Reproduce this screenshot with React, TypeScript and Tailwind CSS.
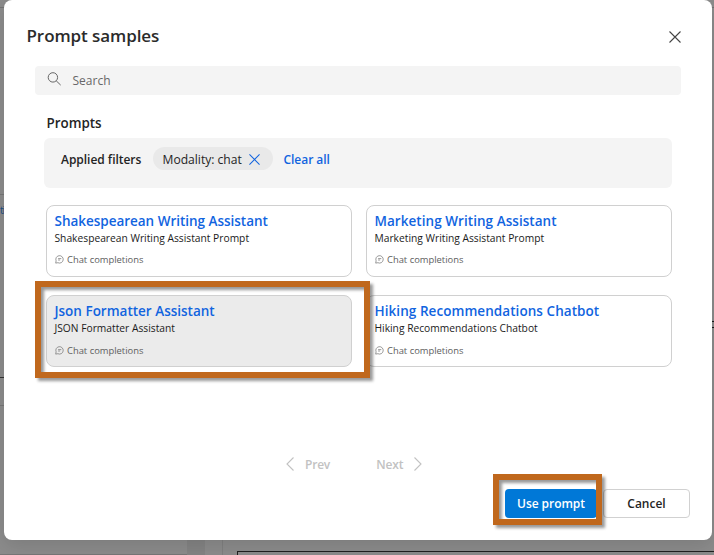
import React from "react";

type Prompt = { title: string; description: string; selected?: boolean; titleSpacing: string; metaOffset: string };

const prompts: Prompt[] = [
  { title: "Shakespearean Writing Assistant", description: "Shakespearean Writing Assistant Prompt", titleSpacing: "tracking-[-0.02px]", metaOffset: "mt-[7px]" },
  { title: "Marketing Writing Assistant", description: "Marketing Writing Assistant Prompt", titleSpacing: "tracking-[0.05px]", metaOffset: "mt-[7px]" },
  { title: "Json Formatter Assistant", description: "JSON Formatter Assistant", selected: true, titleSpacing: "tracking-[0px]", metaOffset: "mt-[8px]" },
  { title: "Hiking Recommendations Chatbot", description: "Hiking Recommendations Chatbot", titleSpacing: "tracking-[0.06px]", metaOffset: "mt-[8px]" },
];

function Cross({ className }: { className: string }) {
  return (
    <svg viewBox="0 0 12 12" className={className} fill="none" stroke="currentColor" strokeWidth="1.1">
      <path d="M.5.5l11 11M11.5.5l-11 11" />
    </svg>
  );
}

function ChatIcon() {
  return (
    <svg viewBox="0 0 9 9" className="mb-[2px] h-[9px] w-[9px] shrink-0" fill="none" stroke="#707070" strokeWidth=".7">
      <path d="M.7 8.1l.4-2.3A3.7 3.7 0 1 1 2.9 7.7zM3.1 3.6h3.2M3.1 5h2" />
    </svg>
  );
}

function Card({ prompt }: { prompt: Prompt }) {
  return (
    <div className={`flex h-[72px] flex-col rounded-[8px] border border-[#d0d0d0] pl-[7.5px] ${prompt.selected ? "bg-[#ebebeb]" : "bg-white"}`}>
      <div className={`mt-[6px] h-[18px] text-[13.5px] leading-[18px] font-semibold whitespace-nowrap text-[#1164df] ${prompt.titleSpacing}`}>{prompt.title}</div>
      <div className="h-[16px] text-[10.25px] leading-[16px] whitespace-nowrap text-[#1b1b1b]">{prompt.description}</div>
      <div className={`flex h-[14px] items-center gap-[3.5px] text-[9.4px] leading-[14px] text-[#606060] ${prompt.metaOffset}`}>
        <ChatIcon />
        <span>Chat completions</span>
      </div>
    </div>
  );
}

function Backdrop() {
  return (
    <div className="absolute inset-0 overflow-hidden bg-[#8c8c8c]">
      <div className="absolute top-[7px] h-px w-full bg-[#747474]" />
      <div className="absolute top-[194px] h-px w-[5px] bg-[#777]" />
      <div className="absolute top-[202px] left-0 text-[10px] leading-4 tracking-[-1px] text-[#174f83]">ti</div>
      <div className="absolute top-[377px] h-px w-[5px] bg-[#333]" />
      <div className="absolute top-[405px] h-px w-[5px] bg-[#777]" />
      <div className="absolute top-[321px] right-0 h-[7px] w-[2px] border-y border-[#1a1a1a]" />
      <div className="absolute top-[530px] left-[187px] h-[25px] w-[18px] bg-[#848484]" />
      <div className="absolute top-[530px] left-[222px] h-[25px] w-px bg-[#808080]" />
      <div className="absolute top-[551px] left-[237px] h-[20px] w-[500px] border border-[#202020]" />
      <div className="absolute top-[554px] h-px w-[187px] bg-[#777]" />
    </div>
  );
}

export default function App() {
  return (
    <div className="relative h-[555px] w-[714px] overflow-hidden font-['Open_Sans','Noto_Sans',sans-serif]">
      <Backdrop />
      <main className="relative ml-1 flex h-[540px] w-[708px] flex-col rounded-[8px] bg-white shadow-[0_6px_20px_rgba(0,0,0,0.12)]">
        <header className="flex h-[66px] items-start justify-between pt-[24px] pr-[31px] pl-[22.5px]">
          <h1 className="text-[17px] leading-6 font-semibold tracking-[-0.08px] text-[#2b2b2b]">Prompt samples</h1>
          <Cross className="mt-[7px] h-[12px] w-[12px] text-[#444]" />
        </header>

        <div className="ml-[31px] flex h-[29px] w-[646px] shrink-0 items-center rounded-[4px] bg-[#f4f4f4] pl-3">
          <svg viewBox="0 0 14 14" className="mb-[3px] h-[14px] w-[14px]" fill="none" stroke="#666" strokeWidth="1">
            <circle cx="5.9" cy="5.4" r="4.7" />
            <path d="M9.2 8.8l4.5 4.3" />
          </svg>
          <span className="ml-[11.5px] text-[12px] leading-[18px] text-[#686868]">Search</span>
        </div>

        <h2 className="mt-[18px] ml-[42.5px] h-[21px] text-[13.4px] leading-[20px] font-semibold text-[#242424]">Prompts</h2>

        <div className="mt-[4px] ml-[40px] flex h-[50px] w-[628px] shrink-0 items-start rounded-[6px] bg-[#f4f4f4] pt-[9px] pl-[17px] text-[12px] leading-[25px] whitespace-nowrap">
          <span className="w-[92px] font-semibold tracking-[-0.03px] text-[#242424]">Applied filters</span>
          <div className="flex h-[23px] w-[120px] items-center rounded-full bg-[#e9e9e9] pl-[9.5px]">
            <span className="mt-[2px] w-[86px] text-[12.1px] text-[#242424]">Modality: chat</span>
            <Cross className="mt-[2px] h-[11px] w-[11px] text-[#1164df]" />
          </div>
          <span className="ml-[10.5px] font-semibold tracking-[-0.05px] text-[#1164df]">Clear all</span>
        </div>

        <div className="mt-[17px] ml-[42px] grid w-[626px] shrink-0 grid-cols-2 gap-x-[14px] gap-y-[18px]">
          {prompts.map((prompt) => <Card key={prompt.title} prompt={prompt} />)}
        </div>

        <nav className="mt-[87px] ml-[282px] flex h-[20px] w-[136px] items-center text-[12px] font-semibold text-[#c2c2c2]">
          <svg viewBox="0 0 8 14" className="h-[14px] w-[8px]" fill="none" stroke="currentColor" strokeWidth="1.1"><path d="M7.5.5L1 7l6.5 6.5" /></svg>
          <span className="mt-[2px] ml-[11px] tracking-[-0.2px]">Prev</span>
          <span className="mt-[2px] ml-auto tracking-[-0.1px]">Next</span>
          <svg viewBox="0 0 8 14" className="ml-[10.5px] h-[14px] w-[8px]" fill="none" stroke="currentColor" strokeWidth="1.1"><path d="M.5.5L7 7 .5 13.5" /></svg>
        </nav>

        <footer className="mt-[15px] flex h-[29px] justify-end gap-[6px] pr-[22px] text-[12px] font-semibold">
          <button className="h-[29px] w-[92px] rounded-[4px] bg-[#0078d7] tracking-[-0.05px] text-white">Use prompt</button>
          <button className="h-[29px] w-[87px] rounded-[4px] border border-[#d1d1d1] text-[#242424]">Cancel</button>
        </footer>
      </main>

      <div className="pointer-events-none absolute top-[281px] left-[35px] h-[97px] w-[335px] border-[6px] border-[#c0681d] drop-shadow-[3px_3px_1.5px_rgba(0,0,0,0.4)]" />
      <div className="pointer-events-none absolute top-[474px] left-[493px] h-[51px] w-[109px] border-[6px] border-[#c0681d] drop-shadow-[3px_3px_1.5px_rgba(0,0,0,0.4)]" />
    </div>
  );
}
